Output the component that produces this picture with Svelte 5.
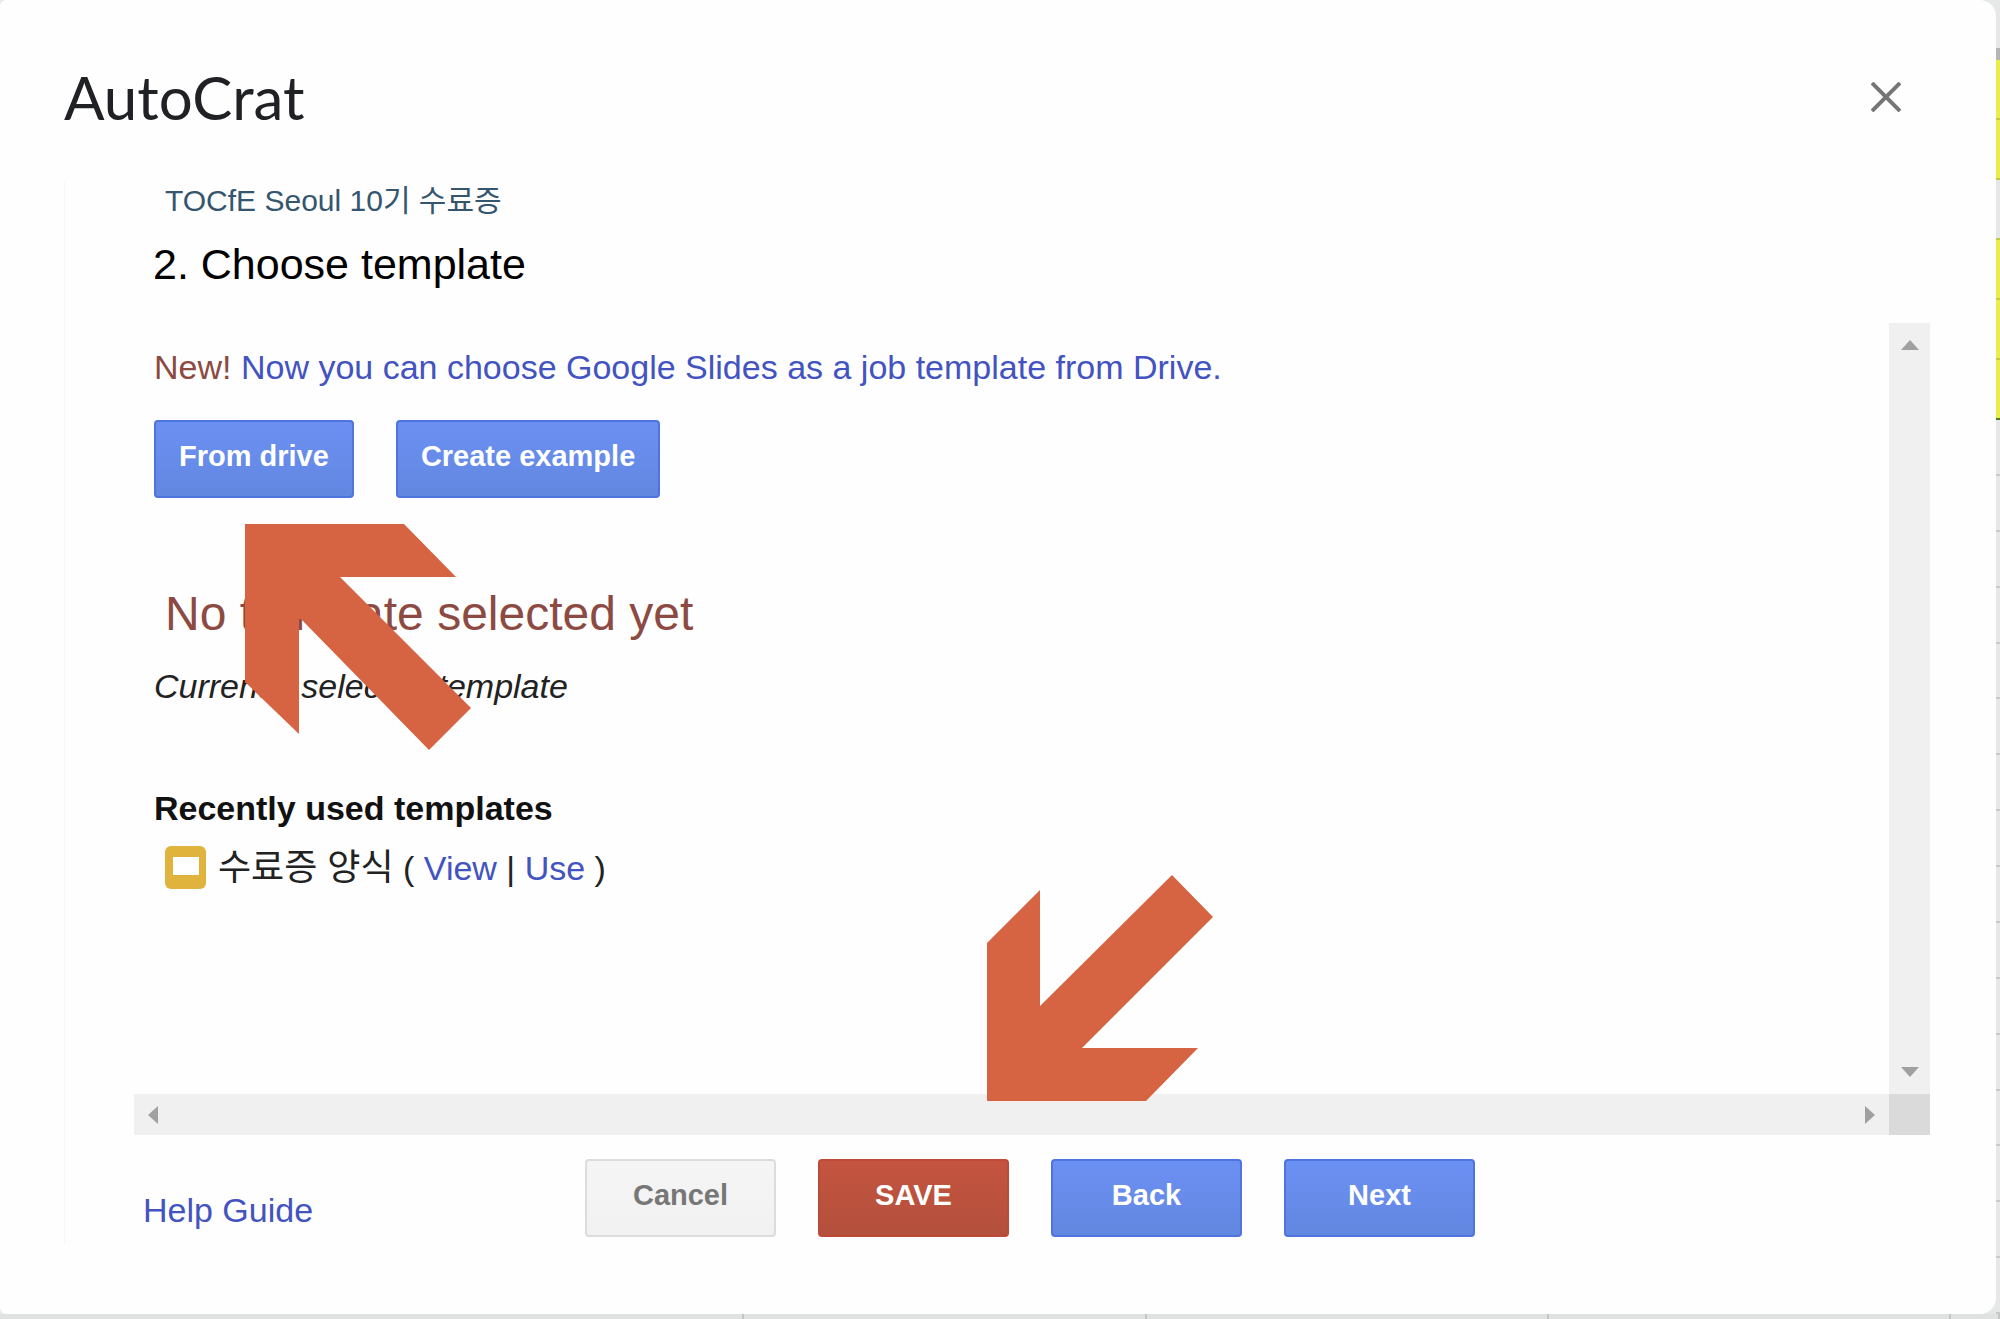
<script lang="ts">
	const jobName = 'TOCfE Seoul 10기 수료증';
	const recentTemplates = [{ id: 1, name: '수료증 양식' }];

	// spreadsheet cells peeking out from behind the dialog
	const headRows = ['blank', 'ruler', 'marked', 'marked', 'plain', 'marked', 'marked', 'marked last'];
	const emptyRows = Array.from({ length: 16 }, (_, i) => i);
	const columns = Array.from({ length: 5 }, (_, i) => i);
</script>

<div class="page">
	<main class="dialog">
		<header>
			<h1>AutoCrat</h1>
			<button class="close" type="button" aria-label="Close">
				<svg viewBox="0 0 30 30" width="30" height="30">
					<path d="M1 1 29 29M29 1 1 29" fill="none" stroke="#757575" stroke-width="4" />
				</svg>
			</button>
		</header>

		<div class="frame">
			<p class="job">{jobName}</p>
			<h2>2. Choose template</h2>

			<div class="scroller">
				<div class="content">
					<p class="news">
						<span class="new">New!</span>
						<a href="#slides">Now you can choose Google Slides as a job template from Drive.</a>
					</p>
					<div class="actions">
						<button class="btn blue" type="button">From drive</button>
						<button class="btn blue" type="button">Create example</button>
					</div>
					<p class="empty">No template selected yet</p>
					<p class="current">Currently selected template</p>

					<h3>Recently used templates</h3>
					{#each recentTemplates as template (template.id)}
						<div class="recent">
							<svg viewBox="0 0 41 43" width="41" height="43">
								<rect width="41" height="43" rx="6" fill="#e0b33c" />
								<rect x="8" y="11" width="26" height="18" fill="#fff" />
							</svg>
							<span>
								<span class="name">{template.name}</span> ( <a href="#view">View</a> | <a href="#use">Use</a> )
							</span>
						</div>
					{/each}
				</div>

				<div class="track vertical">
					<svg viewBox="0 0 18 10" width="18" height="10"><path d="M0 10 9 0l9 10z" /></svg>
					<svg viewBox="0 0 18 10" width="18" height="10"><path d="M0 0 9 10l9-10z" /></svg>
				</div>
				<div class="track horizontal">
					<svg viewBox="0 0 10 18" width="10" height="18"><path d="M10 0 0 9l10 9z" /></svg>
					<svg viewBox="0 0 10 18" width="10" height="18"><path d="M0 0l10 9-10 9z" /></svg>
				</div>
				<div class="corner"></div>
			</div>

			<footer>
				<a class="help" href="#help">Help Guide</a>
				<div class="actions">
					<button class="btn grey" type="button">Cancel</button>
					<button class="btn red" type="button">SAVE</button>
					<button class="btn blue" type="button">Back</button>
					<button class="btn blue" type="button">Next</button>
				</div>
			</footer>
		</div>
	</main>

	<div class="sheet-side">
		{#each headRows as row}
			<div class="cell {row}"></div>
		{/each}
		{#each emptyRows as row (row)}
			<div class="cell filler"></div>
		{/each}
	</div>
	<div class="sheet-bottom">
		{#each columns as column (column)}
			<div></div>
		{/each}
	</div>

	<svg class="pointer to-drive" viewBox="0 0 226 226" width="226" height="226">
		<path d="M0 0h159l52 53H95l131 131-42 42L56 95h-2v115L0 158z" />
	</svg>
	<svg class="pointer to-save" viewBox="0 0 226 226" width="226" height="226">
		<path d="M0 68 53 15v116L185 0l41 42L95 173h116l-52 53H0z" />
	</svg>
</div>

<style>
	:global(body) {
		background: #e6e7e7;
	}

	.page {
		position: relative;
		display: grid;
		grid-template-columns: 1fr 4px;
		grid-template-rows: 1fr 5px;
		min-height: 100vh;
		font-family: 'Liberation Sans', 'Noto Sans CJK KR', sans-serif;
		font-size: 34px;
		line-height: 40px;
		color: #222;
	}

	.dialog {
		display: flex;
		flex-direction: column;
		background: #fefefe;
		border-radius: 6px 16px 16px 6px;
	}

	h1,
	h2,
	h3,
	p {
		margin: 0;
	}

	a {
		color: #4353c0;
		text-decoration: none;
	}

	header {
		display: flex;
		justify-content: space-between;
		align-items: center;
		padding: 61px 95px 0 64px;
	}

	h1 {
		font-family: Lato, sans-serif;
		font-size: 60px;
		font-weight: 400;
		line-height: 72px;
		color: #202124;
	}

	.close {
		display: flex;
		padding: 0;
		border: none;
		background: none;
		cursor: pointer;
	}

	.frame {
		flex: 1;
		display: flex;
		flex-direction: column;
		margin: 48px 66px 70px 64px;
		padding-bottom: 7px;
		border-left: 1px solid #f7f7f7;
	}

	.job {
		padding-left: 100px;
		font-size: 30px;
		color: #34566e;
	}

	h2 {
		margin-top: 13px;
		padding-left: 88px;
		font-size: 43px;
		font-weight: 400;
		line-height: 60px;
		color: #000;
	}

	.scroller {
		flex: 1;
		display: grid;
		grid-template-columns: 1fr 41px;
		grid-template-rows: 1fr 41px;
		margin: 29px 0 0 69px;
	}

	.content {
		padding: 24px 0 0 20px;
	}

	.new,
	.empty {
		color: #8c4a42;
	}

	.actions {
		display: flex;
		gap: 42px;
	}

	.content .actions {
		margin-top: 33px;
	}

	.btn {
		height: 78px;
		padding: 0 23px 6px;
		border: 2px solid;
		border-radius: 4px;
		font-family: inherit;
		font-size: 29px;
		font-weight: 700;
		color: #fff;
		cursor: pointer;
	}

	.blue {
		border-color: #4f74e0;
		background: linear-gradient(#6b90f3, #6287e0);
	}

	.red {
		border-color: #bd4a38;
		background: linear-gradient(#c4543f, #b3503d);
	}

	.grey {
		border-color: #dcdcdc;
		background: linear-gradient(#f5f5f5, #f1f1f1);
		color: #777;
	}

	.empty {
		margin-top: 86px;
		padding-left: 11px;
		font-size: 48px;
		line-height: 60px;
	}

	.current {
		margin-top: 22px;
		font-style: italic;
	}

	h3 {
		margin-top: 82px;
		font-size: 34px;
		font-weight: 700;
		color: #111;
	}

	.recent {
		display: flex;
		align-items: center;
		gap: 12px;
		margin-top: 18px;
		padding-left: 11px;
	}

	.name {
		font-size: 36px;
	}

	.track {
		display: flex;
		justify-content: space-between;
		align-items: center;
		background: #f0f0f0;
		fill: #a0a0a0;
	}

	.vertical {
		flex-direction: column;
		padding: 17px 0;
	}

	.horizontal {
		padding: 0 14px;
	}

	.corner {
		background: #dadada;
	}

	footer {
		display: flex;
		align-items: center;
		margin-top: 24px;
		padding-left: 78px;
	}

	.help {
		width: 442px;
		padding-top: 24px;
	}

	footer .btn {
		width: 191px;
	}

	.sheet-side {
		display: flex;
		flex-direction: column;
	}

	.cell {
		box-sizing: border-box;
		height: 60px;
		border-bottom: 2px solid #c9c9c9;
	}

	.blank {
		height: 48px;
		border: none;
	}

	.ruler {
		height: 12px;
		border: none;
		background: #b4b4b4;
	}

	.marked {
		border-color: #c3c74c;
		background: #e9ee4e;
	}

	.last {
		border-color: #4c7a2a;
	}

	.plain {
		border-color: #c3c74c;
	}

	.filler {
		flex: 1;
	}

	.sheet-bottom {
		grid-column: 1 / -1;
		display: grid;
		grid-template-columns: 744fr 403fr 402fr 402fr 49fr;
		background: #e0e2e1;
	}

	.sheet-bottom div {
		border-right: 2px solid #c4c6c5;
	}

	.pointer {
		position: absolute;
		fill: #d66442;
	}

	.to-drive {
		left: 245px;
		top: 524px;
	}

	.to-save {
		left: 987px;
		top: 875px;
	}
</style>
